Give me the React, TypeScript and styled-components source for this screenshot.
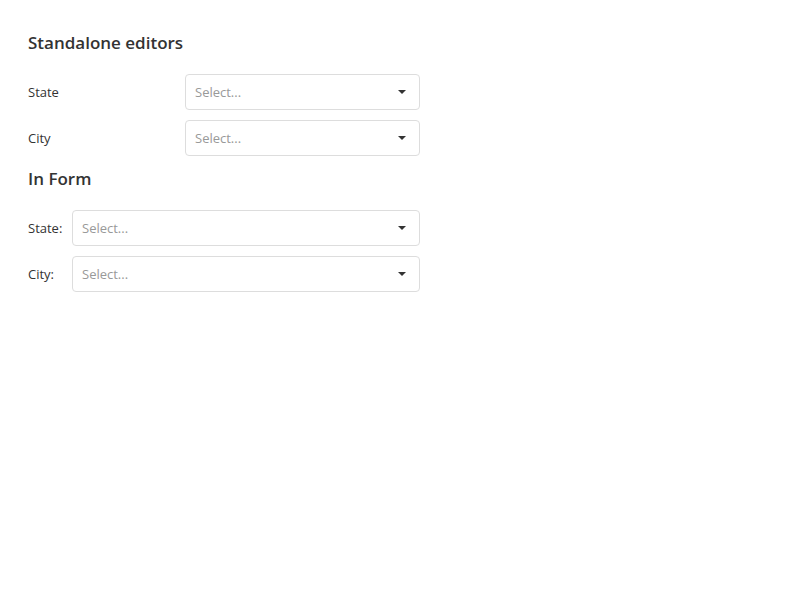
import styled, { createGlobalStyle } from 'styled-components';

const GlobalStyle = createGlobalStyle`
  body {
    margin: 0;
    background: #fff;
    font-family: "Open Sans", "Noto Sans", "Liberation Sans", sans-serif;
    color: #333;
  }
`;

const Page = styled.div`
  width: 392px;
  padding: 31px 0 0 28px;
`;

const Heading = styled.h3`
  margin: 0 0 19px;
  font-size: 17px;
  line-height: 24px;
  font-weight: 600;
  color: #333;
  & + * {
    margin-top: 0;
  }
`;

const Fields = styled.div<{ $labelWidth: number }>`
  display: grid;
  grid-template-columns: ${(p) => p.$labelWidth}px 1fr;
  row-gap: 10px;
  align-items: center;
  margin-bottom: 11px;
`;

const Label = styled.label`
  font-size: 13px;
  color: #333;
`;

const SelectBox = styled.div`
  box-sizing: border-box;
  height: 36px;
  border: 1px solid #ddd;
  border-radius: 4px;
  display: flex;
  align-items: center;
  padding: 0 13px 0 9px;
  background: #fff;
`;

const Placeholder = styled.span`
  flex: 1;
  font-size: 13px;
  color: #999;
`;

const Caret = styled.span`
  width: 0;
  height: 0;
  border-left: 4px solid transparent;
  border-right: 4px solid transparent;
  border-top: 4px solid #333;
`;

function Select() {
  return (
    <SelectBox>
      <Placeholder>Select...</Placeholder>
      <Caret />
    </SelectBox>
  );
}

export default function App() {
  return (
    <>
      <GlobalStyle />
      <Page>
        <Heading>Standalone editors</Heading>
        <Fields $labelWidth={157}>
          <Label>State</Label>
          <Select />
          <Label>City</Label>
          <Select />
        </Fields>
        <Heading>In Form</Heading>
        <Fields $labelWidth={44}>
          <Label>State:</Label>
          <Select />
          <Label>City:</Label>
          <Select />
        </Fields>
      </Page>
    </>
  );
}
